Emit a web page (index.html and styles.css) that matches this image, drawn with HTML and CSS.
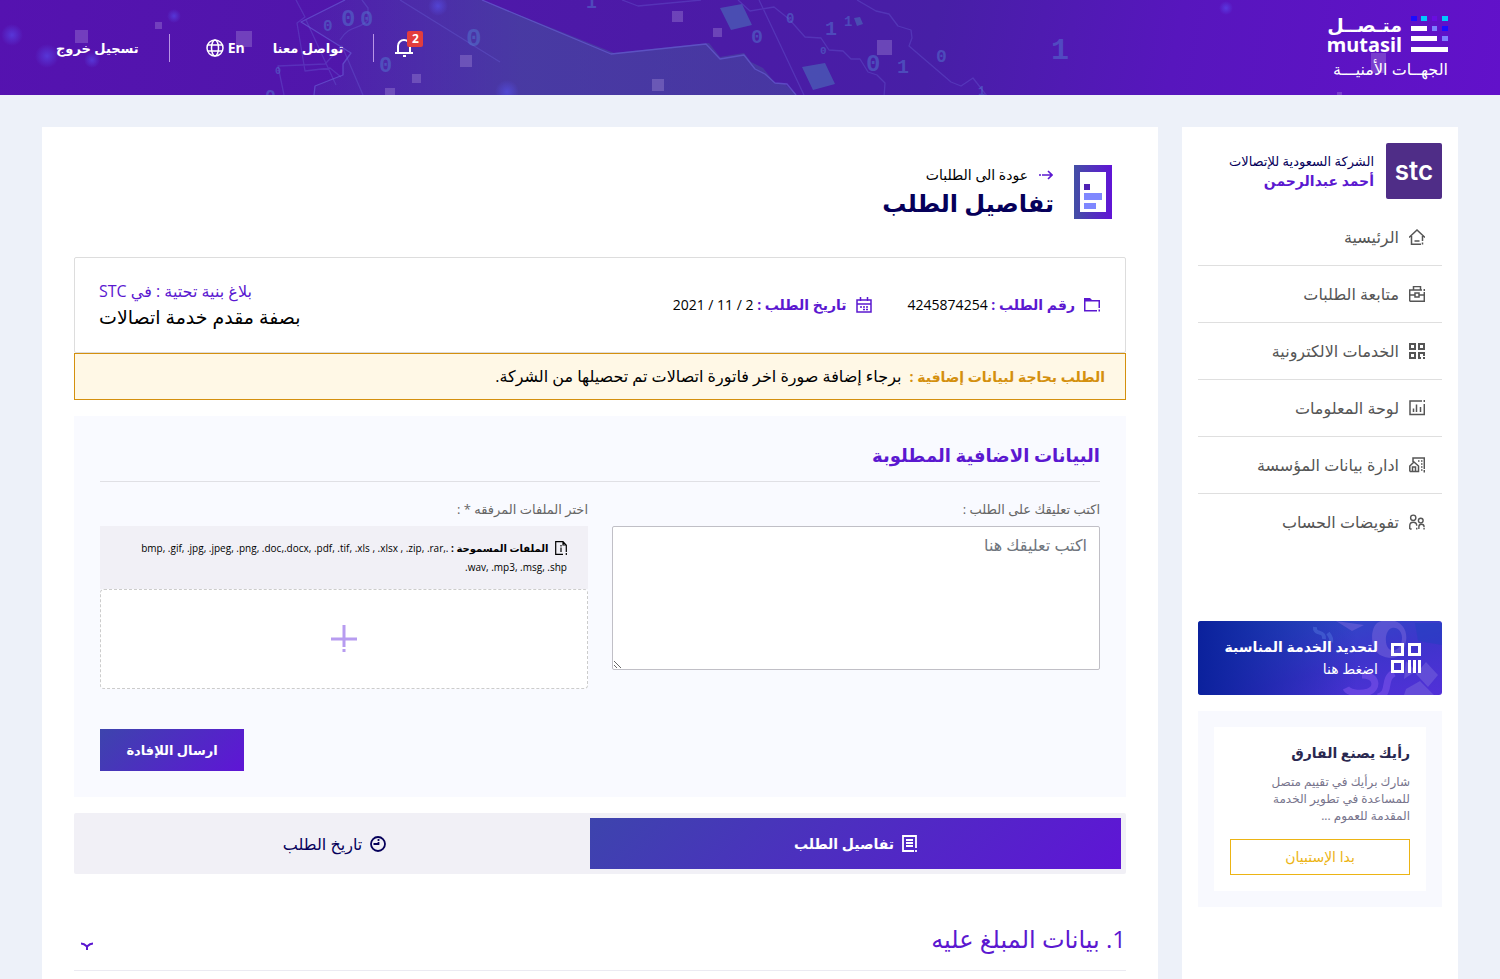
FILE: index.html
```html
<!DOCTYPE html>
<html lang="ar" dir="rtl">
<head>
<meta charset="utf-8">
<meta name="viewport" content="width=device-width, initial-scale=1">
<title>تفاصيل الطلب</title>
<link rel="stylesheet" href="styles.css">
</head>
<body>
<header class="header">
  <svg class="header-art" viewBox="0 0 1500 95" preserveAspectRatio="xMidYMid slice" aria-hidden="true">
    <defs>
      <linearGradient id="land" x1="0" y1="0" x2="1" y2="0"><stop offset="0" stop-color="#4a4ab0" stop-opacity=".1"/><stop offset=".45" stop-color="#4648a0" stop-opacity=".7"/><stop offset="1" stop-color="#4648a0" stop-opacity=".6"/></linearGradient>
      <radialGradient id="glow"><stop offset="0" stop-color="#5a5aff" stop-opacity=".5"/><stop offset="1" stop-color="#5a5aff" stop-opacity="0"/></radialGradient>
    </defs>
    <path fill="url(#land)" d="M345 0 301 22l50 31-8 11v11l-28 11-1 9h483l-12-11-10-1-12-15-12-6-7-9-24 4-11-14-95 10L482 0z"/>
    <g fill="none" stroke="#6a62d8" stroke-opacity=".6" stroke-width="1.3" stroke-linejoin="round">
      <path d="M345 0 301 22l50 31-8 11v11l-28 11-1 9M482 0l129 54 95-10 14 15 24-4 11 14 10 5 10 9 12 1 9 11"/>
      <path stroke-opacity=".35" d="M296 0l9 17-8 6 8 48 25-3 11 9M306 20l30 65M284 95l-6-29 47-2 17-18 21 49M622 0l16 6 63-6M738 0l12 11 24-4 15 12 16 18 16 1 8 12 14 1 8 8h9l8 13 9 3 8 8-1 14M759 0l45 95M857 0l19 11 13 3 9 12 13 4 1 8-3 8 42 36 10 4 12-8 14 18M340 40c10-16 20-10 28-20V8l-6-8M400 0l100 62"/>
    </g>
    <g fill="#4a63b8" fill-opacity=".7"><path d="M720 8l22-4 10 21-21 5zM802 67l23-4 10 21-22 6zM854 18l6-1 3 7-6 2z"/></g>
    <g class="art-digits">
      <text x="341" y="26" font-size="24">0</text><text x="360" y="26" font-size="22">0</text><text x="323" y="31" font-size="16">0</text><text x="466" y="46" font-size="26">0</text><text x="379" y="72" font-size="22">0</text><text x="275" y="74" font-size="10">0</text><text x="265" y="102" font-size="18">0</text><text x="586" y="8" font-size="18">1</text><text x="751" y="43" font-size="20">0</text><text x="786" y="23" font-size="14">0</text><text x="825" y="35" font-size="20">1</text><text x="844" y="26" font-size="14">1</text><text x="820" y="54" font-size="11">0</text><text x="866" y="71" font-size="24">0</text><text x="897" y="73" font-size="20">1</text><text x="936" y="62" font-size="18">0</text><text x="978" y="95" font-size="12">1</text><text x="1051" y="59" font-size="30">1</text>
    </g>
    <g fill="url(#glow)"><circle cx="12" cy="35" r="11"/><circle cx="47" cy="56" r="12"/><circle cx="92" cy="60" r="8"/><circle cx="174" cy="16" r="7"/><circle cx="507" cy="92" r="12"/><circle cx="1226" cy="8" r="7"/><circle cx="438" cy="6" r="10"/></g>
    <g fill="#b49ae0" fill-opacity=".32"><path d="M75 30h13v13H75zM155 22h7v7h-7zM236 31h16v16h-16zM460 55h12v12h-12zM412 74h9v9h-9zM385 88h10v7h-10zM652 79h12v12h-12zM672 11h11v11h-11zM713 28h9v9h-9zM877 40h15v15h-15zM886 47h4v4h-4zM1371 53h15v20h-15zM1337 92h5v3h-5z"/></g>
  </svg>
  <a class="brand" href="#">
    <span class="brand-row">
      <svg width="37" height="37" viewBox="0 0 37 37" aria-hidden="true"><path fill="#1c0cff" d="M0 0h6v5H0zM31 10h6v5h-6z"/><path fill="#00c8ff" d="M10 0h6v5h-6zM31 0h6v5h-6z"/><path fill="#6a0de0" d="M21 0h5v5h-5z"/><path fill="#7d80ff" d="M21 10h5v5h-5zM31 20h6v5h-6z"/><path fill="#fff" d="M0 10h16v5H0zM0 20h26v5H0zM0 31h37v5H0z"/></svg>
      <span class="brand-names"><span class="brand-ar">متـصــل</span><span class="brand-en">mutasil</span></span>
    </span>
    <span class="brand-sub">الجهــات الأمنيـــة</span>
  </a>
  <nav class="top-nav" aria-label="روابط الحساب">
    <button class="bell" type="button" aria-label="الإشعارات">
      <svg width="18" height="18" viewBox="0 0 18 18" fill="none" stroke="#fff" stroke-width="2" aria-hidden="true"><path d="M0 14h18M3 14V7a6 6 0 0 1 12 0v7"/><path d="M8 17h3"/></svg>
      <span class="badge">2</span>
    </button>
    <a class="top-link contact" href="#">تواصل معنا</a>
    <a class="top-link lang" href="#">En
      <svg width="18" height="18" viewBox="0 0 18 18" fill="none" stroke="#fff" stroke-width="1.5" aria-hidden="true"><circle cx="9" cy="9" r="8"/><ellipse cx="9" cy="9" rx="3.5" ry="8"/><path d="M2 6h14M2 12h14"/></svg>
    </a>
    <a class="top-link logout" href="#">تسجيل خروج</a>
  </nav>
</header>

<div class="page">
  <aside class="sidebar">
    <div class="profile">
      <span class="avatar">stc</span>
      <span class="profile-text"><span class="company">الشركة السعودية للإتصالات</span><strong class="user">أحمد عبدالرحمن</strong></span>
    </div>
    <nav class="menu" aria-label="القائمة الرئيسية">
      <a class="menu-item" href="#"><svg class="ic" viewBox="0 0 16 16"><path d="M0 8.500 8 1l8 7.500M2.500 7v8.200H12M13.500 7v5M13.500 13.500v2M5.500 12h5"/></svg>الرئيسية</a>
      <a class="menu-item" href="#"><svg class="ic" viewBox="0 0 16 16"><path d="M4.500 3.500v-3h7v3M.7 15.300V4H13M.7 15.300h14.600V6M15.300 3v2M1 9h5M10 9h5M6 7h4v4H6z"/></svg>متابعة الطلبات</a>
      <a class="menu-item" href="#"><svg class="ic ic-bold" viewBox="0 0 16 16"><path d="M1 1h5v5H1zM10 1h5v5h-5zM1 10h5v5H1zM12 15h-2v-5h5v3M14 15h2"/></svg>الخدمات الالكترونية</a>
      <a class="menu-item" href="#"><svg class="ic" viewBox="0 0 16 16"><path d="M13 1H1v13.500h14.300V4M15.300 0v2M4.500 12V8.500M7.500 12V4.500M11.500 12V7"/></svg>لوحة المعلومات</a>
      <a class="menu-item" href="#"><svg class="ic" viewBox="0 0 16 16"><path d="M4 5V1h11.300v11M15.300 13v2.500M.8 14.500V9l4.200-4 4.500 4v5.500H.8M3.500 14v-4h3v4M9 4h1.500M12 4h1.500M12 7h1.500M12 10h1.500M12 13h1.500"/></svg>ادارة بيانات المؤسسة</a>
      <a class="menu-item" href="#"><svg class="ic" viewBox="0 0 17 16"><circle cx="4.500" cy="3.500" r="2.800"/><circle cx="12.500" cy="6.500" r="2.500"/><path d="M.8 15.500V12c0-5 7.400-5 7.400 0M8.200 14v2M10.500 15.500V13c0-3.500 5.500-3.500 5.500 0v.5M16 14.500v1.500M.8 15.500h2"/></svg>تفويضات الحساب</a>
    </nav>
    <a class="promo" href="#">
      <svg class="promo-art" viewBox="0 0 244 74" preserveAspectRatio="xMaxYMid slice" aria-hidden="true">
        <g fill="#7a68dc" fill-opacity=".5"><path fill-rule="evenodd" d="M179 2c14-8 32 0 29 18s-14 20-26 14c-10-6-10-26-3-32m15 5c-8 2-8 20-1 22s11-6 11-12-4-11-10-10"/><path fill="#2040c0" d="M217 2h27v22l-24-4z"/><path d="M228 41l12 13-10 12-12-13zM208 40l10 10-12 8zM208 68l14-8 14 14h-30zM138 0l28 4-12 6z"/></g>
        <path fill="none" stroke="#7650e8" stroke-opacity=".65" stroke-width="7" d="M164 54c16 0 16 14 6 17s-20 0-22-4M196 52c-12 6-2 20-16 24"/>
        <path fill="none" stroke="#5578e0" stroke-opacity=".45" stroke-width="4" d="M117 6c-1 9 10 2 9 12M130 12c3 4 4 6 3 9"/>
      </svg>
      <svg class="promo-icon" width="30" height="30" viewBox="0 0 30 30" aria-hidden="true"><path fill="none" stroke="#fff" stroke-width="3" d="M1.500 1.500h10v10h-10zM18.500 1.500h10v10h-10zM1.500 18.500h10v10h-10zM18.500 17v13M23.500 17v13M28.500 17v13"/></svg>
      <span class="promo-text"><strong class="promo-title">لتحديد الخدمة المناسبة</strong><span class="promo-sub">اضغط هنا</span></span>
    </a>
    <section class="survey">
      <div class="survey-card">
        <h2 class="survey-title">رأيك يصنع الفارق</h2>
        <p class="survey-text">شارك برأيك في تقييم متصل للمساعدة في تطوير الخدمة المقدمة للعموم ...</p>
        <button class="survey-btn" type="button">بدا الإستبيان</button>
      </div>
    </section>
  </aside>

  <main class="main">
    <div class="title-row">
      <svg width="38" height="54" viewBox="0 0 38 54" aria-hidden="true"><defs><linearGradient id="doc"><stop offset="0" stop-color="#434fa5"/><stop offset="1" stop-color="#6114d6"/></linearGradient></defs><path fill="url(#doc)" fill-rule="evenodd" d="M0 0h38v54H0zM6 7v40h26V7z"/><path fill="#4f22b4" d="M10 19h6v6h-6z"/><path fill="#7f88ff" d="M10 28h18v7H10zM10 38h12v6H10z"/></svg>
      <div>
        <a class="back" href="#"><svg width="14" height="10" viewBox="0 0 14 10" fill="none" stroke="#5b18d0" stroke-width="1.600" aria-hidden="true"><path d="M0 5h2M3 5h10M9 1l4 4-4 4"/></svg>عودة الى الطلبات</a>
        <h1 class="title">تفاصيل الطلب</h1>
      </div>
    </div>

    <section class="info">
      <p class="fact"><svg width="16" height="16" viewBox="0 0 16 16" aria-hidden="true"><path fill="#5b18d0" d="M0 1h6l2 2h8v8h-1.500V4.500H1.500V13H13v1.500H0zM14.500 12.500H16v2h-1.500z"/></svg><span><b>رقم الطلب :</b> 4245874254</span></p>
      <p class="fact"><svg width="16" height="16" viewBox="0 0 16 16" fill="none" stroke="#5b18d0" stroke-width="1.500" aria-hidden="true"><path d="M1 3h14v12H1zM1 7h14M4.500 0v4M11.500 0v4M4 10h2M7 10h2M10 10h2M7 12.500h2M10 12.500h2"/></svg><span><b>تاريخ الطلب :</b> 2 / 11 / 2021</span></p>
      <div class="kind"><p class="kind-top">بلاغ بنية تحتية : في STC</p><p class="kind-main">بصفة مقدم خدمة اتصالات</p></div>
    </section>
    <p class="alert"><b>الطلب بحاجة لبيانات إضافية :</b> برجاء إضافة صورة اخر فاتورة اتصالات تم تحصيلها من الشركة.</p>

    <form class="extra">
      <h2 class="extra-title">البيانات الاضافية المطلوبة</h2>
      <div class="fields">
        <div class="field">
          <label class="label" for="comment">اكتب تعليقك على الطلب :</label>
          <textarea class="comment" id="comment" placeholder="اكتب تعليقك هنا"></textarea>
        </div>
        <div class="field">
          <label class="label" for="files">اختر الملفات المرفقه * :</label>
          <p class="allowed"><svg width="12" height="14" viewBox="0 0 12 14" fill="none" stroke="#000" stroke-width="1.200" aria-hidden="true"><path d="M8 13.300H.7V.7H8l3.300 3.500V11M11.300 12v2M8 1v3h3"/><path d="M6 4v1.500M6 6.500V11"/></svg> <b>الملفات المسموحة :</b> .bmp, .gif, .jpg, .jpeg, .png, .doc,.docx, .pdf, .tif, .xls , .xlsx , .zip, .rar, .wav, .mp3, .msg, .shp</p>
          <label class="drop" for="files"><svg width="28" height="28" viewBox="0 0 28 28" fill="none" stroke="#b79cf0" stroke-width="3" aria-hidden="true"><path d="M1 14h26M14 0v22M14 24v3"/></svg></label>
          <input class="file-input" id="files" type="file" multiple>
        </div>
      </div>
      <button class="send" type="submit">ارسال اللإفادة</button>
    </form>

    <div class="tabs" role="tablist">
      <button class="tab tab-on" type="button" role="tab" aria-selected="true"><svg width="15" height="17" viewBox="0 0 15 17" fill="none" stroke="#fff" stroke-width="1.800" aria-hidden="true"><path d="M12 16H1V1h13v12M14 15v2M4 5h7M4 8h7M4 11h7"/></svg>تفاصيل الطلب</button>
      <button class="tab" type="button" role="tab" aria-selected="false"><svg width="16" height="16" viewBox="0 0 16 16" fill="none" stroke="#06005a" stroke-width="1.800" aria-hidden="true"><circle cx="8" cy="8" r="7"/><path d="M8.500 3v2M9.300 8H3.500M8.500 6v2.500"/></svg>تاريخ الطلب</button>
    </div>

    <button class="accordion" type="button" aria-expanded="false"><span>1. بيانات المبلغ عليه</span><svg width="14" height="8" viewBox="0 0 14 8" fill="none" stroke="#5b18d0" stroke-width="2" aria-hidden="true"><path d="M1 1.500c3 0 4 1 6 3 2-2 3-3 6-3M7 4v4"/></svg></button>
  </main>
</div>
</body>
</html>
```
FILE: styles.css
```css
* { box-sizing: border-box; }
body {
  margin: 0;
  height: 100vh;
  overflow: hidden;
  background: #edf1f9;
  color: #000;
  font: 14px/20px "Open Sans", "DejaVu Sans", sans-serif;
}
h1, h2, p { margin: 0; }
a { color: inherit; text-decoration: none; }
button, textarea { font: inherit; cursor: pointer; }
svg { flex: none; }

.header {
  position: relative;
  display: flex;
  justify-content: space-between;
  align-items: center;
  height: 95px;
  padding: 0 52px 0 56px;
  background: linear-gradient(100deg, #5512b0 0%, #4b1ba6 48%, #471fa6 62%, #5716bd 78%, #6211ca 100%);
  color: #fff;
}
.header-art { position: absolute; inset: 0; width: 100%; height: 100%; direction: ltr; }
.art-digits { fill: #5378d0; fill-opacity: .5; font-family: "Liberation Mono", monospace; font-weight: 700; }
.brand { position: relative; width: 121px; }
.brand-row { display: flex; gap: 9px; align-items: flex-start; }
.brand-names { display: flex; flex-direction: column; flex: 1; white-space: nowrap; }
.brand-ar { font-size: 19px; line-height: 18px; font-weight: 700; }
.brand-en { font: 700 20px/21px "Noto Sans", sans-serif; }
.brand-sub { display: block; margin-top: 4px; font-size: 16px; line-height: 20px; white-space: nowrap; }
.top-nav { position: relative; display: flex; align-items: center; font-size: 13px; font-weight: 700; }
.top-link { white-space: nowrap; }
.bell { position: relative; display: flex; width: 18px; padding: 0; border: 0; background: none; }
.badge {
  position: absolute;
  top: -8px;
  left: 12px;
  width: 16px;
  height: 16px;
  border-radius: 2px;
  background: #e23d3d;
  color: #fff;
  font-size: 12px;
  font-weight: 700;
  line-height: 16px;
}
.contact, .logout { margin-right: 21px; padding-right: 30px; border-right: 1px solid #b995e6; line-height: 28px; }
.lang { display: flex; align-items: center; gap: 4px; margin-right: 28px; font-size: 14px; }
.logout { margin-right: 36px; }

.page { display: flex; gap: 24px; padding: 32px 42px 0; }
.sidebar { flex: 0 0 276px; min-height: 900px; padding: 16px; background: #fff; }
.profile { display: flex; gap: 12px; align-items: center; }
.avatar {
  display: grid;
  place-items: center;
  flex: none;
  width: 56px;
  height: 56px;
  border-radius: 2px;
  background: #4f2d87;
  color: #fff;
  font: 600 26px/24px Inter, sans-serif;
}
.profile-text { display: flex; flex-direction: column; white-space: nowrap; }
.company { color: #06005a; font-size: 13px; }
.user { color: #5b18d0; font-size: 14px; }
.menu { margin-top: 10px; }
.menu-item {
  display: flex;
  gap: 10px;
  align-items: center;
  height: 57px;
  padding: 0 17px;
  border-bottom: 1px solid #dfdfdf;
  color: #555;
  font-size: 16px;
}
.menu-item:last-child { border-bottom-color: transparent; }
.ic { width: 16px; height: 16px; fill: none; stroke: #555; stroke-width: 1.5; }
.ic-bold { stroke-width: 2; }
.promo {
  position: relative;
  display: flex;
  gap: 13px;
  align-items: center;
  height: 74px;
  margin-top: 70px;
  padding: 0 21px;
  overflow: hidden;
  border-radius: 3px;
  background: linear-gradient(165deg, #2a50c4 10%, #3f34cc 60%, #5230d8 100%);
  color: #fff;
}
.promo::before { content: ""; position: absolute; inset: 0; background: linear-gradient(90deg, #0b219c, transparent 65%); }
.promo-art { position: absolute; inset: 0; width: 100%; height: 100%; }
.promo-icon { position: relative; }
.promo-text { position: relative; display: flex; flex-direction: column; gap: 2px; white-space: nowrap; }
.promo-title { font-size: 14px; }
.promo-sub { font-size: 14px; }
.survey { margin-top: 16px; padding: 16px; background: #f8f9fe; }
.survey-card { padding: 16px; background: #fff; }
.survey-title { color: #2a2850; font-size: 14px; line-height: 20px; }
.survey-text { margin-top: 10px; padding-left: 16px; color: #77748c; font-size: 12px; line-height: 17px; }
.survey-btn {
  display: block;
  width: 100%;
  height: 36px;
  margin-top: 15px;
  border: 1px solid #ecb414;
  background: #fff;
  color: #ecb414;
  font-size: 14px;
}

.main { flex: 1; min-width: 0; min-height: 900px; padding: 32px; background: #fff; }
.title-row { display: flex; gap: 20px; align-items: flex-start; padding: 6px 14px 0; }
.back { display: flex; gap: 11px; align-items: center; font-size: 14px; line-height: 20px; padding-right: 1px; }
.title { color: #06005a; font-size: 24px; line-height: 36px; }
.info {
  display: flex;
  gap: 36px;
  align-items: center;
  height: 96px;
  margin-top: 36px;
  padding: 0 25px 0 24px;
  border: 1px solid #ddd;
  border-radius: 2px;
}
.fact { display: flex; gap: 9px; align-items: center; white-space: nowrap; }
.fact b { color: #5b18d0; }
.kind { margin-right: auto; text-align: left; }
.kind-top { color: #5b18d0; font-size: 16px; line-height: 24px; }
.kind-main { font-size: 19px; line-height: 28px; }
.alert { padding: 0 20px; border: 1px solid #d4900e; background: #fff8e6; font-size: 16px; line-height: 45px; }
.alert b { margin-left: 4px; color: #d4900e; font-size: 14px; }

.extra { margin-top: 16px; padding: 24px 26px 26px; background: #f9faff; }
.extra-title { padding-bottom: 11px; border-bottom: 1px solid #e0e0e5; color: #5b18d0; font-size: 18px; line-height: 30px; }
.fields { display: grid; grid-template-columns: 1fr 1fr; gap: 24px; margin-top: 17px; }
.label { display: block; margin-bottom: 7px; color: #666; font-size: 13px; line-height: 20px; }
.comment {
  display: block;
  width: 100%;
  height: 144px;
  padding: 8px 12px;
  border: 1px solid #c0bfc6;
  border-radius: 2px;
  background: #fff;
  font-size: 16px;
  resize: both;
}
.comment::placeholder { color: #6f757d; opacity: 1; }
.allowed { height: 63px; padding: 13px 21px 0; background: #f1f0f6; font-size: 10px; line-height: 19px; }
.allowed svg { margin-left: 4px; vertical-align: -3px; }
.drop { display: grid; place-items: center; height: 100px; border: 1px dashed #ccc; border-radius: 4px; background: #fff; }
.file-input { position: absolute; width: 1px; height: 1px; opacity: 0; }
.send {
  display: block;
  min-width: 144px;
  height: 42px;
  margin: 40px auto 0 0;
  border: 0;
  background: linear-gradient(135deg, #3d44ad, #5f15d6);
  color: #fff;
  font-size: 13px;
  font-weight: 700;
}
.tabs { display: flex; margin-top: 16px; padding: 5px; border-radius: 2px; background: #f1f0f6; }
.tab {
  display: flex;
  flex: 1 1 511px;
  gap: 8px;
  align-items: center;
  justify-content: center;
  height: 51px;
  padding: 0;
  border: 0;
  background: none;
  color: #06005a;
  font-size: 16px;
}
.tab-on { flex-basis: 531px; background: linear-gradient(135deg, #3d44ad, #5f15d6); color: #fff; font-size: 14px; font-weight: 700; }
.accordion {
  display: flex;
  justify-content: space-between;
  align-items: center;
  width: 100%;
  height: 63px;
  margin-top: 34px;
  padding: 0 0 0 6px;
  border: 0;
  border-bottom: 1px solid #ebeaf2;
  background: none;
  color: #5b18d0;
  font-size: 24px;
}
.accordion svg { margin-top: 14px; }
```
